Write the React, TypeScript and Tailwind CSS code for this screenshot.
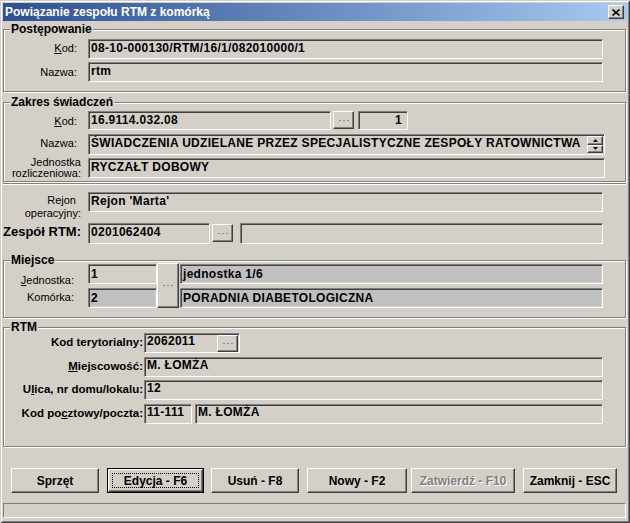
import React from "react";

const RAISED =
  "bg-[#d4d0c8] border border-t-white border-l-white border-r-[#404040] border-b-[#404040] shadow-[inset_-1px_-1px_0_#808080]";
const SUNKEN =
  "border border-t-[#808080] border-l-[#808080] border-b-white border-r-white shadow-[inset_1px_1px_0_#404040,inset_-1px_-1px_0_#d4d0c8]";
const GROUP =
  "mr-[1px] border border-[#808080] shadow-[inset_1px_1px_0_#fff,1px_1px_0_#fff]";
const VALUE = "block whitespace-nowrap pl-[2px] text-[12px] font-bold leading-[14px] tracking-[0.3px] text-black";

type Kids = { className?: string; children?: React.ReactNode };

function Field({ className = "", children, gray, textClass = "pt-[1px]" }: Kids & { gray?: boolean; textClass?: string }) {
  return (
    <div className={`${SUNKEN} ${gray ? "bg-[#c0c0c0]" : "bg-[#d4d0c8]"} overflow-hidden ${className}`}>
      <span className={`${VALUE} ${textClass}`}>{children}</span>
    </div>
  );
}

function Dots() {
  return (
    <span className="flex items-center gap-[2px]">
      <span className="h-[1px] w-[2px] bg-[#8c8c8c]" />
      <span className="h-[1px] w-[2px] bg-[#8c8c8c]" />
      <span className="h-[1px] w-[2px] bg-[#8c8c8c]" />
    </span>
  );
}

function DotsBtn({ className = "" }: Kids) {
  return (
    <div className={`${RAISED} flex items-center justify-center ${className}`}>
      <Dots />
    </div>
  );
}

function Legend({ children }: Kids) {
  return (
    <legend className="ml-[6px] bg-[#d4d0c8] px-[1px] text-[12px] font-bold leading-[12px] text-black">
      {children}
    </legend>
  );
}

// leading is passed by each caller
function Label({ className = "", children }: Kids) {
  return <div className={`shrink-0 text-right text-black ${className}`}>{children}</div>;
}

function Btn({ className = "", children, def, disabled }: Kids & { def?: boolean; disabled?: boolean }) {
  const text = disabled
    ? "text-[#808080] [text-shadow:1px_1px_0_#fff]"
    : "text-black";
  if (def) {
    return (
      <div className={`h-[25px] border border-black ${className}`}>
        <div className={`${RAISED} flex h-full w-full items-center justify-center p-[3px]`}>
          <div className={`flex h-full w-full items-center justify-center border border-dotted border-black text-[12px] font-bold ${text}`}>
            {children}
          </div>
        </div>
      </div>
    );
  }
  return (
    <div className={`${RAISED} flex h-[25px] items-center justify-center text-[12px] font-bold ${text} ${className}`}>
      {children}
    </div>
  );
}

function Arrow({ up }: { up?: boolean }) {
  return (
    <svg width="5" height="3" viewBox="0 0 5 3">
      <path d={up ? "M2.5 0L5 3H0z" : "M0 0H5L2.5 3z"} fill="#000" />
    </svg>
  );
}

export default function App() {
  return (
    <div className="flex h-[523px] w-[630px] flex-col overflow-hidden bg-[#d4d0c8] p-[3px] font-['Liberation_Sans',Arial,sans-serif] shadow-[inset_1px_1px_0_#d4d0c8,inset_-1px_-1px_0_#404040,inset_2px_2px_0_#fff,inset_-2px_-2px_0_#808080]">
      {/* title bar */}
      <div className="flex h-[18px] shrink-0 items-center justify-between bg-linear-to-r from-[#2f4f92] to-[#a6caf0] pl-[2px] pr-[3px]">
        <span className="text-[12px] font-bold leading-[14px] text-white">Powiązanie zespołu RTM z komórką</span>
        <div className={`${RAISED} flex h-[14px] w-[16px] items-center justify-center`}>
          <svg width="8" height="7" viewBox="0 0 8 7">
            <path d="M0.5 0.5L7.5 6.5M7.5 0.5L0.5 6.5" stroke="#000" strokeWidth="1.6" />
          </svg>
        </div>
      </div>

      {/* Postępowanie */}
      <fieldset className={`${GROUP} mt-[2px] pb-[9px]`}>
        <Legend>Postępowanie</Legend>
        <div className="mt-[4px] flex items-start">
          <Label className="mt-[2px] w-[73px] text-[11px] leading-[14px]">
            <span className="underline underline-offset-1">K</span>od:
          </Label>
          <Field className="ml-[11px] h-[20px] w-[515px]">08-10-000130/RTM/16/1/082010000/1</Field>
        </div>
        <div className="mt-[3px] flex items-start">
          <Label className="mt-[3px] w-[73px] text-[11px] leading-[14px]">Nazwa:</Label>
          <Field className="ml-[11px] h-[20px] w-[515px]">rtm</Field>
        </div>
      </fieldset>

      {/* Zakres świadczeń */}
      <fieldset className={`${GROUP} mt-[4px] pb-[3px]`}>
        <Legend>Zakres świadczeń</Legend>
        <div className="mt-[3px] flex items-start">
          <Label className="mt-[3px] w-[73px] text-[11px] leading-[14px]">
            <span className="underline underline-offset-1">K</span>od:
          </Label>
          <Field className="ml-[11px] h-[19px] w-[243px]">16.9114.032.08</Field>
          <DotsBtn className="ml-[2px] h-[18px] w-[21px]" />
          <Field className="ml-[4px] h-[19px] w-[50px]" textClass="pt-[1px] pr-[5px] text-right">
            1
          </Field>
        </div>
        <div className="mt-[4px] flex items-start">
          <Label className="mt-[2px] w-[73px] text-[11px] leading-[14px]">Nazwa:</Label>
          <div className={`${SUNKEN} ml-[11px] flex h-[21px] w-[517px] items-start justify-between bg-[#d4d0c8]`}>
            <span className={`${VALUE} pt-[1px]`}>
              ŚWIADCZENIA UDZIELANE PRZEZ SPECJALISTYCZNE ZESPOŁY RATOWNICTWA
            </span>
            <div className="mr-[1px] mt-[1px] flex h-[17px] w-[16px] shrink-0 flex-col">
              <div className={`${RAISED} flex flex-1 items-center justify-center`}>
                <Arrow up />
              </div>
              <div className={`${RAISED} flex flex-1 items-center justify-center`}>
                <Arrow />
              </div>
            </div>
          </div>
        </div>
        <div className="mt-[3px] flex h-[20px] items-start">
          <Label className="-mt-[1px] w-[77px] text-[11px] leading-[11px]">
            <span className="block">Jednostka</span>
            <span className="block">rozliczeniowa:</span>
          </Label>
          <Field className="ml-[7px] h-[20px] w-[517px]">RYCZAŁT DOBOWY</Field>
        </div>
      </fieldset>

      {/* Rejon / Zespół */}
      <div className="mr-[1px] mt-[1px] border-t border-[#808080] pb-[9px] pt-[8px] shadow-[inset_0_1px_0_#fff]">
        <div className="flex h-[20px] items-start">
          <Label className="mt-[2px] w-[78px] text-[11px] leading-[13px]">
            <span className="block pr-[5px]">Rejon</span>
            <span className="block">operacyjny:</span>
          </Label>
          <Field className="ml-[7px] h-[20px] w-[515px]">Rejon 'Marta'</Field>
        </div>
        <div className="mt-[11px] flex items-start">
          <div className="mt-[1px] w-[78px] shrink-0 text-right text-[13px] font-bold leading-[16px] text-black">
            Zespół RTM:
          </div>
          <Field className="ml-[7px] h-[21px] w-[122px]">0201062404</Field>
          <DotsBtn className="ml-[2px] mt-[1px] h-[18px] w-[21px]" />
          <Field className="ml-[7px] h-[21px] w-[363px]"></Field>
        </div>
      </div>

      {/* Miejsce */}
      <fieldset className={`${GROUP} mt-[1px] pb-[9px]`}>
        <Legend>Miejsce</Legend>
        <div className="-mt-[2px] flex items-start">
          <div className="flex w-[70px] shrink-0 flex-col">
            <Label className="mt-[9px] text-[11px] leading-[14px]">
              <span className="underline underline-offset-1">J</span>ednostka:
            </Label>
            <Label className="mt-[3px] text-[11px] leading-[14px]">Komórka:</Label>
          </div>
          <div className="ml-[14px] flex w-[69px] flex-col gap-[4px]">
            <Field className="h-[20px]" textClass="pt-[2px]">1</Field>
            <Field className="h-[20px]" gray textClass="pt-[2px]">2</Field>
          </div>
          <DotsBtn className="-mt-[1px] h-[45px] w-[22px]" />
          <div className="ml-[1px] flex w-[423px] flex-col gap-[4px]">
            <Field className="h-[20px]" gray textClass="pt-[2px]">jednostka 1/6</Field>
            <Field className="h-[20px]" gray textClass="pt-[2px]">PORADNIA DIABETOLOGICZNA</Field>
          </div>
        </div>
      </fieldset>

      {/* RTM */}
      <fieldset className={`${GROUP} mt-[3px] pb-[22px]`}>
        <Legend>RTM</Legend>
        <div className="flex items-start">
          <Label className="mt-[2px] w-[139px] text-[11.5px] font-bold leading-[14px]">Kod terytorialny:</Label>
          <div className={`${SUNKEN} ml-[1px] flex h-[20px] w-[96px] items-start justify-between bg-[#d4d0c8]`}>
            <span className={VALUE}>2062011</span>
            <DotsBtn className="mr-[1px] mt-[1px] h-[17px] w-[21px] shrink-0" />
          </div>
        </div>
        <div className="mt-[4px] flex items-start">
          <Label className="mt-[2px] w-[139px] text-[11.5px] font-bold leading-[14px]">
            <span className="underline underline-offset-1">M</span>iejscowość:
          </Label>
          <Field className="ml-[1px] h-[20px] w-[459px]" textClass="pt-0">M. ŁOMŻA</Field>
        </div>
        <div className="mt-[3px] flex items-start">
          <Label className="mt-[2px] w-[139px] text-[11.5px] font-bold leading-[14px]">
            U<span className="underline underline-offset-1">l</span>ica, nr domu/lokalu:
          </Label>
          <Field className="ml-[1px] h-[20px] w-[459px]" textClass="pt-0">12</Field>
        </div>
        <div className="mt-[4px] flex items-start">
          <Label className="mt-[2px] w-[139px] text-[11.5px] font-bold leading-[14px]">
            Kod po<span className="underline underline-offset-1">c</span>ztowy/poczta:
          </Label>
          <Field className="ml-[1px] h-[20px] w-[48px]" textClass="pt-0">11-111</Field>
          <Field className="ml-[3px] h-[20px] w-[408px]" textClass="pt-0">M. ŁOMŻA</Field>
        </div>
      </fieldset>

      {/* buttons */}
      <div className="mt-[21px] flex pl-[8px]">
        <Btn className="w-[88px]">Sprzęt</Btn>
        <Btn className="ml-[8px] w-[97px]" def>
          Edycja - F6
        </Btn>
        <Btn className="ml-[7px] w-[88px]">Usuń - F8</Btn>
        <Btn className="ml-[8px] w-[100px]">Nowy - F2</Btn>
        <Btn className="ml-[4px] w-[104px]" disabled>
          Zatwierdź - F10
        </Btn>
        <Btn className="ml-[8px] w-[94px]">Zamknij - ESC</Btn>
      </div>

      {/* status bar */}
      <div className="mr-[1px] mt-[10px] h-[15px] border border-t-[#808080] border-l-[#808080] border-b-white border-r-white" />
    </div>
  );
}
